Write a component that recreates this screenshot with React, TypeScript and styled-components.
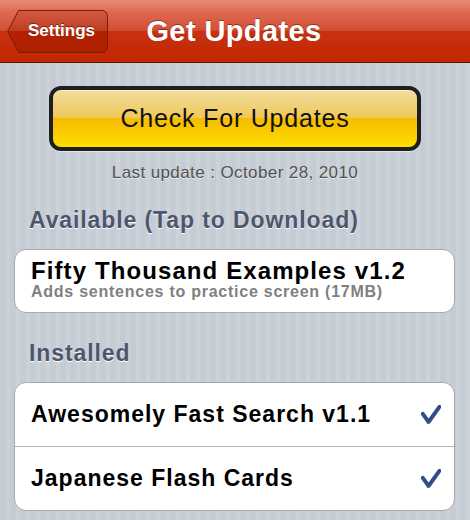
import React from 'react';
import styled, { createGlobalStyle } from 'styled-components';

const GlobalStyle = createGlobalStyle`
  html, body {
    margin: 0;
    padding: 0;
  }
  body {
    font-family: 'Liberation Sans', Helvetica, Arial, sans-serif;
    background: #c5ccd4;
  }
`;

type Addon = {
  title: string;
  note?: string;
};

const available: Addon[] = [
  { title: 'Fifty Thousand Examples v1.2', note: 'Adds sentences to practice screen (17MB)' },
];

const installed: Addon[] = [
  { title: 'Awesomely Fast Search v1.1' },
  { title: 'Japanese Flash Cards' },
];

const BackShape = () => (
  <BackSvg viewBox="0 0 101 43" preserveAspectRatio="none">
    <defs>
      <linearGradient id="backFill" x1="0" y1="0" x2="0" y2="1">
        <stop offset="0" stopColor="#d05c42" />
        <stop offset="0.5" stopColor="#bf3c20" />
        <stop offset="0.5" stopColor="#b22200" />
        <stop offset="1" stopColor="#ad1f00" />
      </linearGradient>
    </defs>
    <path
      d="M11.5 0.5 H95 a5.5 5.5 0 0 1 5.5 5.5 V37 a5.5 5.5 0 0 1 -5.5 5.5 H11.5 L0.8 21.5 Z"
      fill="url(#backFill)"
      stroke="#7a1c08"
      strokeWidth="1"
    />
  </BackSvg>
);

const Check = () => (
  <CheckSvg viewBox="0 0 20 20">
    <polyline
      points="1.8,8.8 7.6,17 18.4,1.8"
      fill="none"
      stroke="#2f4e85"
      strokeWidth="3.9"
      strokeLinecap="round"
      strokeLinejoin="round"
    />
  </CheckSvg>
);

export default function App() {
  return (
    <>
      <GlobalStyle />
      <Screen>
        <NavBar>
          <BackButton>
            <BackShape />
            <BackLabel>Settings</BackLabel>
          </BackButton>
          <NavTitle>Get Updates</NavTitle>
          <span />
        </NavBar>

        <Content>
          <UpdateButton>Check For Updates</UpdateButton>
          <LastUpdate>Last update : October 28, 2010</LastUpdate>

          <SectionHeader space={23}>Available (Tap to Download)</SectionHeader>
          <Group>
            {available.map(item => (
              <Row key={item.title} tall>
                <RowText>
                  <RowTitle wide>{item.title}</RowTitle>
                  <RowNote>{item.note}</RowNote>
                </RowText>
              </Row>
            ))}
          </Group>

          <SectionHeader space={26}>Installed</SectionHeader>
          <Group>
            {installed.map(item => (
              <Row key={item.title}>
                <RowTitle>{item.title}</RowTitle>
                <Check />
              </Row>
            ))}
          </Group>
        </Content>
      </Screen>
    </>
  );
}

const Screen = styled.div`
  width: 470px;
  height: 520px;
  overflow: hidden;
  background: repeating-linear-gradient(
    90deg,
    #c5ccd4 0px,
    #c5ccd4 6px,
    #cbd2d9 6px,
    #cbd2d9 10px
  );
`;

const NavBar = styled.div`
  display: grid;
  grid-template-columns: 1fr auto 1fr;
  align-items: center;
  height: 63px;
  padding: 0 7px;
  box-sizing: border-box;
  border-bottom: 1px solid #5e1203;
  background: linear-gradient(
    #e88a76 0%,
    #dc6a52 20%,
    #d34e33 49%,
    #c63212 50%,
    #c22700 100%
  );
`;

const BackButton = styled.div`
  position: relative;
  justify-self: start;
  display: flex;
  align-items: center;
  justify-content: center;
  width: 101px;
  height: 43px;
  padding-left: 8px;
  box-sizing: border-box;
`;

const BackSvg = styled.svg`
  position: absolute;
  inset: 0;
  width: 100%;
  height: 100%;
`;

const BackLabel = styled.span`
  position: relative;
  color: #fff;
  font-size: 17px;
  font-weight: bold;
  text-shadow: 0 -1px 0 rgba(0, 0, 0, 0.45);
`;

const NavTitle = styled.h1`
  margin: 0 0 0 -2px;
  color: #fff;
  font-size: 29px;
  font-weight: bold;
  letter-spacing: 0.4px;
  text-shadow: 0 -1px 0 rgba(0, 0, 0, 0.4);
`;

const Content = styled.div`
  display: flex;
  flex-direction: column;
  padding-top: 23px;
`;

const UpdateButton = styled.div`
  display: flex;
  align-items: center;
  justify-content: center;
  align-self: center;
  width: 372px;
  height: 65px;
  box-sizing: border-box;
  border: 4px solid #1e1e1e;
  border-radius: 12px;
  color: #111;
  font-size: 25px;
  letter-spacing: 0.8px;
  background: linear-gradient(
    #f3dd9e 0%,
    #f0d27c 25%,
    #f0c858 49%,
    #f5bc00 50%,
    #f9cc00 75%,
    #ffe000 100%
  );
  box-shadow: 0 1px 0 rgba(255, 255, 255, 0.5), inset 0 1px 0 rgba(255, 255, 255, 0.5);
`;

const LastUpdate = styled.div`
  margin-top: 12px;
  text-align: center;
  color: #525252;
  font-size: 17px;
  letter-spacing: 0.4px;
  line-height: 20px;
  text-shadow: 0 1px 0 rgba(255, 255, 255, 0.6);
`;

const SectionHeader = styled.div<{ space: number }>`
  margin-top: ${props => props.space}px;
  padding-left: 29px;
  color: #4c566c;
  font-size: 23px;
  font-weight: bold;
  letter-spacing: 0.9px;
  line-height: 28px;
  text-shadow: 0 1px 0 #fff;
`;

const Group = styled.div`
  margin: 15px 15px 0 14px;
  border: 1px solid #a6a9ad;
  border-radius: 12px;
  background: #fff;
  overflow: hidden;
`;

const Row = styled.div<{ tall?: boolean }>`
  display: flex;
  align-items: center;
  justify-content: space-between;
  height: ${props => (props.tall ? 62 : 63)}px;
  padding: 0 13px ${props => (props.tall ? 4 : 0)}px 16px;
  box-sizing: border-box;

  & + & {
    border-top: 1px solid #b4b4b4;
    height: 64px;
  }
`;

const RowText = styled.div`
  display: flex;
  flex-direction: column;
`;

const RowTitle = styled.div<{ wide?: boolean }>`
  color: #000;
  font-size: ${props => (props.wide ? 24 : 23)}px;
  font-weight: bold;
  letter-spacing: ${props => (props.wide ? 1.1 : 1)}px;
  line-height: 25px;
`;

const RowNote = styled.div`
  color: #808080;
  font-size: 16px;
  font-weight: bold;
  letter-spacing: 0.75px;
  line-height: 18px;
`;

const CheckSvg = styled.svg`
  width: 20px;
  height: 20px;
  flex: none;
`;
